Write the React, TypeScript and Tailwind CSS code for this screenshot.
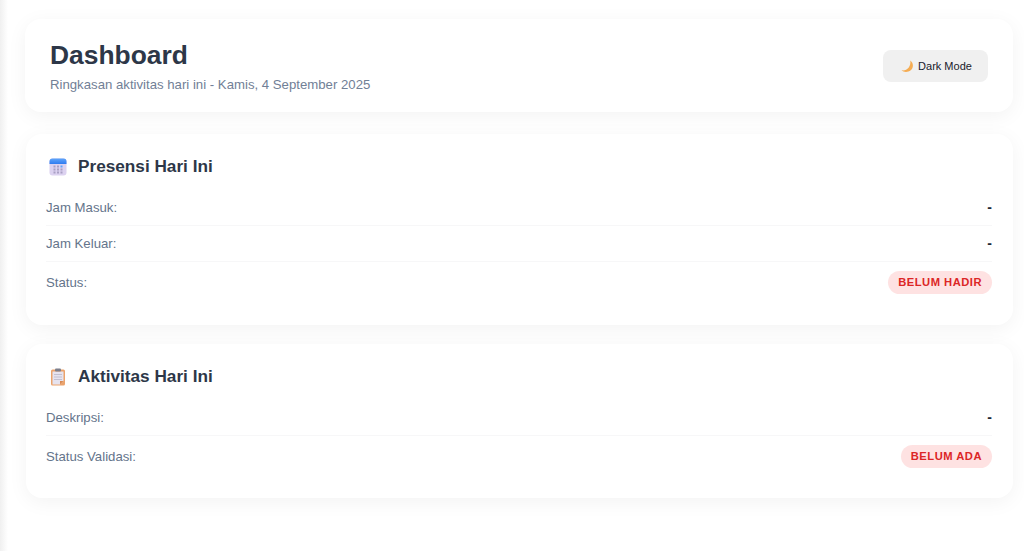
import React from 'react';

const font = { fontFamily: '"Liberation Sans", Arial, sans-serif' };

function CalendarIcon() {
  return (
    <svg width="18" height="18" viewBox="0 0 18 18">
      <defs>
        <linearGradient id="calTop" x1="0" y1="0" x2="0" y2="1">
          <stop offset="0" stopColor="#60a5fa" />
          <stop offset="1" stopColor="#2f7bf0" />
        </linearGradient>
      </defs>
      <rect x="0.5" y="0.5" width="17" height="17" rx="3" fill="#dcd2f0" />
      <path d="M0.5 6V3.5a3 3 0 0 1 3-3h11a3 3 0 0 1 3 3V6z" fill="url(#calTop)" />
      {[4.5, 8, 11.5].map((x) =>
        [7.5, 10.5, 13.5].map((y) => (
          <rect key={`${x}-${y}`} x={x} y={y} width="2" height="2" fill={x === 11.5 && y === 7.5 ? '#60a5fa' : '#a9a0c4'} />
        ))
      )}
    </svg>
  );
}

function ClipboardIcon() {
  return (
    <svg width="18" height="18" viewBox="0 0 18 18">
      <rect x="2" y="1.5" width="14" height="16" rx="1.5" fill="#eba36c" />
      <path d="M3.5 3.5h11v9.500l-3.500 3.500h-7.500z" fill="#e6e3ef" />
      <path d="M11 16.500v-3.500h3.500z" fill="#d98a52" />
      <path d="M5 6.500h8M5 9h8M5 11.500h8" stroke="#c3c0d0" strokeWidth="1" />
      <rect x="6" y="0.500" width="6" height="3" rx="1" fill="#7d7f8c" />
    </svg>
  );
}

function MoonIcon() {
  return (
    <svg width="13" height="13" viewBox="0 0 12 12">
      <path d="M8.500 0.500c3 2 3.500 6.500 0.500 9-2.700 2.200-6.500 2-8.500 0 2.500 0.500 5-0.500 6.500-2.300 1.500-2 2-4.500 1.500-6.700z" fill="#f5ac52" />
    </svg>
  );
}

function Row({ label, last, children }: { label: string; last?: boolean; children: React.ReactNode }) {
  return (
    <div className={`flex items-center justify-between ${last ? 'py-[9px]' : 'h-9 border-b border-[#f7f7f8]'}`}>
      <span className="text-[13.2px] text-[#64748b]">{label}</span>
      {children}
    </div>
  );
}

function Badge({ children }: { children: React.ReactNode }) {
  return (
    <span className="flex h-[23px] items-center rounded-full bg-[#fee2e2] px-[10px] text-[11.2px] font-bold tracking-[0.5px] text-[#dc2626] uppercase">
      {children}
    </span>
  );
}

function Dash() {
  return <span className="text-[14px] font-bold text-[#1f2937]">-</span>;
}

function Card({ icon, title, className, children }: { icon: React.ReactNode; title: string; className: string; children: React.ReactNode }) {
  return (
    <section className={`ml-px rounded-2xl bg-white pt-5 pr-[21px] pl-5 shadow-[0_4px_20px_rgba(0,0,0,0.05)] ${className}`}>
      <div className="mb-3 flex h-6 items-center pt-px pl-[3px]">
        {icon}
        <h2 className="ml-[11px] text-[17.200px] font-bold text-[#2d3748]">{title}</h2>
      </div>
      {children}
    </section>
  );
}

export default function App() {
  return (
    <div className="relative h-[551px] overflow-hidden bg-white pt-[19px] pr-[11px] pl-[25px]" style={font}>
      <div className="absolute top-0 bottom-0 left-0 w-2 bg-gradient-to-r from-[#f0f0f0] to-white" />

      <header className="relative flex h-[93px] items-center justify-between rounded-2xl bg-white px-[25px] shadow-[0_4px_20px_rgba(0,0,0,0.05)]">
        <div>
          <h1 className="text-[26.400px] leading-[32px] font-bold text-[#2d3748]">Dashboard</h1>
          <p className="mt-[6px] text-[13.200px] leading-[16px] text-[#718096]">
            Ringkasan aktivitas hari ini - Kamis, 4 September 2025
          </p>
        </div>
        <button className="flex h-8 w-[105px] items-center justify-center gap-[4px] rounded-lg bg-[#f0f0f0] pt-px pl-[2px] text-[11px] text-[#1a202c]">
          <MoonIcon />
          Dark Mode
        </button>
      </header>

      <div className="relative mt-[22px] flex flex-col gap-[19px]">
        <Card icon={<CalendarIcon />} title="Presensi Hari Ini" className="pb-[22px]">
          <Row label="Jam Masuk:"><Dash /></Row>
          <Row label="Jam Keluar:"><Dash /></Row>
          <Row label="Status:" last><Badge>Belum Hadir</Badge></Row>
        </Card>
        <Card icon={<ClipboardIcon />} title="Aktivitas Hari Ini" className="pb-[21px]">
          <Row label="Deskripsi:"><Dash /></Row>
          <Row label="Status Validasi:" last><Badge>Belum Ada</Badge></Row>
        </Card>
      </div>
    </div>
  );
}
